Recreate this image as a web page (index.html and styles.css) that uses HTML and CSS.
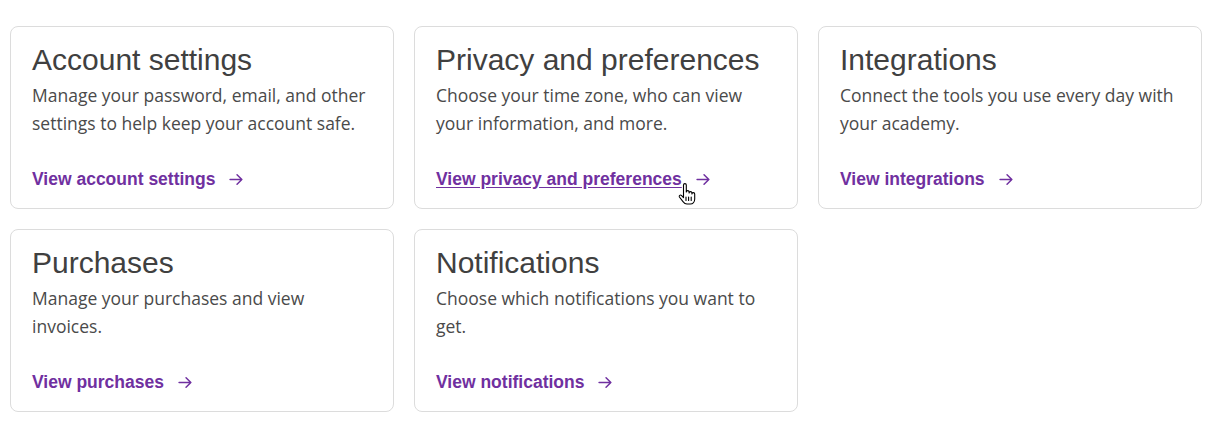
FILE: index.html
```html
<!DOCTYPE html>
<html lang="en">
<head>
<meta charset="utf-8">
<title>Settings</title>
<link rel="stylesheet" href="styles.css">
</head>
<body>
<main class="grid">
  <section class="card">
    <h2 class="card-title">Account settings</h2>
    <p class="card-desc">Manage your password, email, and other settings to help keep your account safe.</p>
    <a class="card-link" href="#">View account settings<svg class="arrow" viewBox="0 0 14 14"><path d="M1 7h11M7.5 2.5 12 7l-4.5 4.5"/></svg></a>
  </section>
  <section class="card">
    <h2 class="card-title">Privacy and preferences</h2>
    <p class="card-desc">Choose your time zone, who can view your information, and more.</p>
    <a class="card-link hover" href="#"><span class="label">View privacy and preferences</span><svg class="arrow" viewBox="0 0 14 14"><path d="M1 7h11M7.5 2.5 12 7l-4.5 4.5"/></svg><svg class="cursor" viewBox="0 0 18 22"><path d="M5.5 2a1.4 1.4 0 0 1 2.8 0V9a1.4 1.4 0 0 1 2.8 0v1a1.4 1.4 0 0 1 2.8 0v1a1.4 1.4 0 0 1 2.8 0v5c0 2.8-1.8 5-4.4 5H9c-2 0-2.900-.9-4-2.4L1.4 14a1.3 1.3 0 0 1 2-1.6l2.1 2.2Z"/><path d="M10.6 14v3.5M13.2 14v3.5M8 14v3.5"/></svg></a>
  </section>
  <section class="card">
    <h2 class="card-title">Integrations</h2>
    <p class="card-desc">Connect the tools you use every day with your academy.</p>
    <a class="card-link" href="#">View integrations<svg class="arrow" viewBox="0 0 14 14"><path d="M1 7h11M7.5 2.5 12 7l-4.5 4.5"/></svg></a>
  </section>
  <section class="card">
    <h2 class="card-title">Purchases</h2>
    <p class="card-desc">Manage your purchases and view invoices.</p>
    <a class="card-link" href="#">View purchases<svg class="arrow" viewBox="0 0 14 14"><path d="M1 7h11M7.5 2.5 12 7l-4.5 4.5"/></svg></a>
  </section>
  <section class="card">
    <h2 class="card-title">Notifications</h2>
    <p class="card-desc">Choose which notifications you want to get.</p>
    <a class="card-link" href="#">View notifications<svg class="arrow" viewBox="0 0 14 14"><path d="M1 7h11M7.5 2.5 12 7l-4.5 4.5"/></svg></a>
  </section>
</main>
</body>
</html>
```

FILE: styles.css
```css
html, body {
  margin: 0;
  padding: 0;
  background: #ffffff;
}

.grid {
  display: grid;
  grid-template-columns: repeat(3, 384px);
  column-gap: 20px;
  row-gap: 20px;
  padding: 26px 10px 0 10px;
}

.card {
  display: flex;
  flex-direction: column;
  align-items: flex-start;
  border: 1px solid #dcdcdc;
  border-radius: 8px;
  padding: 16px 20px 17px 21px;
  background: #fff;
}

.card-title {
  margin: 0;
  font-family: "Liberation Sans", Arial, sans-serif;
  font-weight: 400;
  font-size: 30px;
  line-height: 34px;
  color: #404040;
}

.card-desc {
  margin: 4px 0 30px 0;
  font-family: "Open Sans", sans-serif;
  font-size: 17.5px;
  line-height: 28px;
  color: #4a4a4a;
}

.card-link {
  position: relative;
  margin-top: auto;
  display: inline-flex;
  align-items: center;
  font-family: "Liberation Sans", Arial, sans-serif;
  font-weight: 700;
  font-size: 17.5px;
  line-height: 24px;
  color: #7030a0;
  text-decoration: none;
}

.card-link.hover .label {
  text-decoration: underline;
  text-underline-offset: 2px;
}

.arrow {
  width: 15px;
  height: 15px;
  margin-left: 14px;
  fill: none;
  stroke: #7030a0;
  stroke-width: 1.4;
  stroke-linecap: round;
  stroke-linejoin: round;
}

.cursor {
  position: absolute;
  left: 242px;
  top: 16px;
  width: 18px;
  height: 22px;
  fill: #ffffff;
  stroke: #000000;
  stroke-width: 1.1;
  stroke-linejoin: round;
  stroke-linecap: round;
}
```
